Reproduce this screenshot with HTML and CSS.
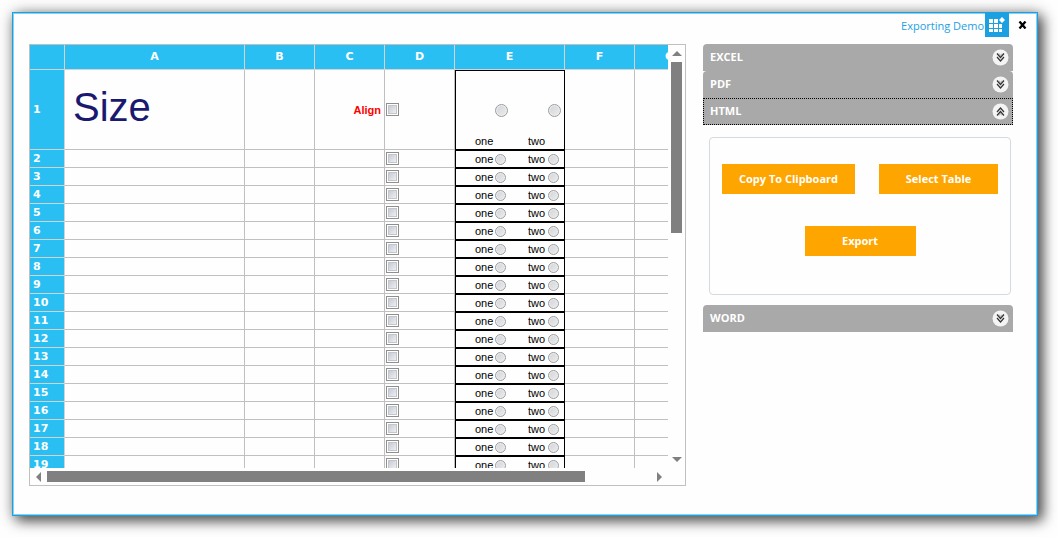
FILE: index.html
```html
<!DOCTYPE html>
<html lang="en">
<head>
<meta charset="utf-8">
<title>Exporting Demo</title>
<link rel="stylesheet" href="styles.css">
</head>
<body>
<svg class="defs" aria-hidden="true">
  <symbol id="chevrons" viewBox="0 0 17 17">
    <circle cx="8.500" cy="8.500" r="8" fill="#f4f4f4"/>
    <path d="M5 4.500L8.500 8.500L12 4.500M5 8L8.500 12L12 8" fill="none" stroke="#333" stroke-width="1.200"/>
    <path d="M7 4.500L8.500 6.500L10 4.500" fill="none" stroke="#999" stroke-width="0.800"/>
  </symbol>
</svg>
<main class="window">
  <header class="bar">
    <span class="title">Exporting Demo</span>
    <svg class="logo" viewBox="0 0 24 24" aria-hidden="true">
      <rect width="24" height="24" fill="#1ba1e2"/>
      <path fill="#fff" d="M4 6h4v4h-4zM9 6h4v4h-4zM4 11h4v4h-4zM9 11h4v4h-4zM14 11h3v4h-3zM4 16h4v3h-4zM9 16h4v3h-4zM14 16h3v3h-3zM17 4l3 3l-3 3l-3 -3z"/>
    </svg>
    <button class="close" type="button" aria-label="Close">
      <svg viewBox="0 0 8 8"><path d="M1 0.500L7 7.500M7 0.500L1 7.500" stroke="#000" stroke-width="2.300"/></svg>
    </button>
  </header>
  <div class="content">
    <section class="sheet">
      <div class="viewport">
        <table class="cells">
          <colgroup><col class="w-index"><col class="w-a"><col class="w-std"><col class="w-std"><col class="w-std"><col class="w-e"><col class="w-std"><col class="w-std"></colgroup>
          <thead><tr><th></th><th>A</th><th>B</th><th>C</th><th>D</th><th>E</th><th>F</th><th>G</th></tr></thead>
          <tbody id="rows">
            <tr class="tall">
              <th>1</th><td class="size">Size</td><td></td><td class="align">Align</td>
              <td><input class="check" type="checkbox" aria-label="D1"></td>
              <td class="choice"><div class="options"><label class="option"><span class="name">one</span><input class="radio" type="radio" name="r1"></label><label class="option"><span class="name">two</span><input class="radio" type="radio" name="r1"></label></div></td>
              <td></td><td></td>
            </tr>
          </tbody>
        </table>
      </div>
      <div class="scroll vertical"><span class="arrow"><i class="tri up"></i></span><div class="track"><div class="thumb"></div></div><span class="arrow"><i class="tri down"></i></span></div>
      <div class="scroll horizontal"><span class="arrow"><i class="tri left"></i></span><div class="track"><div class="thumb"></div></div><span class="arrow"><i class="tri right"></i></span></div>
    </section>
    <aside class="accordion">
      <button class="head" type="button" aria-expanded="false">EXCEL<svg class="icon"><use href="#chevrons"/></svg></button>
      <button class="head" type="button" aria-expanded="false">PDF<svg class="icon"><use href="#chevrons"/></svg></button>
      <button class="head current" type="button" aria-expanded="true">HTML<svg class="icon flipped"><use href="#chevrons"/></svg></button>
      <div class="panel">
        <div class="actions"><button class="action copy" type="button">Copy To Clipboard</button><button class="action select" type="button">Select Table</button></div>
        <div class="actions"><button class="action export" type="button">Export</button></div>
      </div>
      <button class="head" type="button" aria-expanded="false">WORD<svg class="icon"><use href="#chevrons"/></svg></button>
    </aside>
  </div>
</main>
<script src="rows.js"></script>
</body>
</html>
```

FILE: styles.css
```css
* { box-sizing: border-box; }
body {
  margin: 0;
  min-height: 100vh;
  padding: 12px 20px 21px 12px;
  display: flex;
  background: #fefefe;
  font: 11px/14px "Open Sans", "Noto Sans", sans-serif;
}
button { font: inherit; border: 0; padding: 0; margin: 0; }
input { appearance: none; margin: 0; display: block; flex: none; }
.defs { position: absolute; width: 0; height: 0; }

.window {
  flex: 1;
  min-width: 0;
  display: flex;
  flex-direction: column;
  padding: 0 24px 29px 16px;
  background: #fefefe;
  border: 1px solid #1ba1e2;
  box-shadow: inset 0 0 0 1px #8ccdf0, 5px 5px 12px rgba(0, 0, 0, .5), 2px 2px 14px rgba(0, 0, 0, .45);
}
.bar { display: flex; justify-content: flex-end; align-items: center; height: 24px; margin: 0 -16px 7px 0; }
.title { color: #1ba1e2; padding-right: 1px; padding-top: 2px; }
.logo { width: 24px; height: 24px; margin-right: 9px; }
.close { width: 11px; height: 24px; background: none; }
.close svg { display: block; width: 9px; height: 8px; }

.content {
  flex: 1;
  display: grid;
  grid-template-columns: minmax(0, 657fr) minmax(0, 310fr);
  gap: 17px;
}
.sheet {
  display: grid;
  grid-template-columns: minmax(0, 1fr) 17px;
  grid-template-rows: minmax(0, 1fr) 17px;
  border: 1px solid #c0c0c0;
}
.viewport { overflow: hidden; height: 0; min-height: 100%; }
.cells { table-layout: fixed; width: 675px; border-collapse: separate; border-spacing: 0; }
.w-index { width: 35px; }
.w-a { width: 180px; }
.w-std { width: 70px; }
.w-e { width: 110px; }
.cells th, .cells td {
  height: 18px;
  padding: 0;
  border: solid #c0c0c0;
  border-width: 0 1px 1px 0;
  vertical-align: middle;
  line-height: 14px;
}
.cells th {
  background: #29bff2;
  border-color: #d3d3d3;
  color: #fff;
  font-family: "DejaVu Sans", sans-serif;
  font-weight: bold;
}
.cells thead th { height: 25px; }
.cells tbody th { text-align: left; padding-left: 3px; }
.cells .tall > * { height: 80px; }
.cells .size { font: 40px/46px "Liberation Sans", sans-serif; color: #191970; padding: 0 0 6px 8px; }
.cells .align { font-family: "Liberation Sans", sans-serif; font-weight: bold; color: #f00; text-align: right; padding-right: 3px; }
.check {
  width: 13px;
  height: 13px;
  margin-left: 1px;
  border: 1px solid #8e8f8f;
  background: linear-gradient(135deg, #c8cbd6, #f4f4f4) center / 8px 8px no-repeat #fff;
  outline: 1px solid #c3c6cb;
  outline-offset: -3px;
}
.cells .choice { border: 1px solid #000; }
.options { display: flex; align-items: center; height: 16px; }
.option { display: flex; align-items: center; width: 53px; height: 100%; }
.name { width: 39px; padding-left: 19px; font: 11px/14px "Liberation Sans", sans-serif; }
.radio {
  width: 11px;
  height: 11px;
  border: 1px solid #9b9c9c;
  border-radius: 50%;
  background: linear-gradient(135deg, #d0d3da, #ededed) padding-box;
  box-shadow: inset 0 0 0 1px #eee;
}
.tall .options, .tall .option { height: 78px; }
.tall .name { align-self: flex-end; padding-bottom: 1px; }
.tall .radio { width: 13px; height: 13px; }

.scroll { display: flex; align-items: center; }
.vertical { flex-direction: column; }
.track { flex: 1; min-width: 0; }
.vertical .track { width: 11px; }
.thumb { background: #808080; }
.vertical .thumb { height: 44%; }
.vertical .track { min-height: 0; height: 0; }
.horizontal .thumb { width: 89%; height: 11px; }
.arrow { width: 17px; height: 17px; display: flex; align-items: center; justify-content: center; }
.tri { border: 5px solid transparent; }
.up { border-top: 0; border-bottom-color: #808080; }
.down { border-bottom: 0; border-top-color: #808080; }
.left { border-left: 0; border-right-color: #808080; }
.right { border-right: 0; border-left-color: #808080; }

.accordion { font-weight: bold; }
.head {
  display: flex;
  align-items: center;
  justify-content: space-between;
  width: 100%;
  height: 27px;
  padding: 0 4px 1px 7px;
  border-radius: 4px 4px 0 0;
  background: #a9a9a9;
  color: #fff;
}
.current { border-radius: 0; outline: 1px dotted #000; outline-offset: -1px; }
.icon { width: 17px; height: 17px; }
.flipped { transform: rotate(180deg); }
.panel {
  height: 158px;
  margin: 12px 2px 10px 6px;
  padding-top: 26px;
  border: 1px solid #d3dae2;
  border-radius: 4px;
}
.actions { display: flex; justify-content: center; gap: 24px; margin-bottom: 32px; }
.action { height: 30px; background: #ffa500; color: #fff; }
.copy { width: 133px; }
.select { width: 119px; }
.export { width: 111px; }
```

FILE: rows.js
```js
const body = document.getElementById("rows");
for (let n = 2; n <= 19; n++) {
  const option = (name) =>
    `<label class="option"><span class="name">${name}</span><input class="radio" type="radio" name="r${n}"></label>`;
  body.insertAdjacentHTML("beforeend",
    `<tr><th>${n}</th><td></td><td></td><td></td>
     <td><input class="check" type="checkbox" aria-label="D${n}"></td>
     <td class="choice"><div class="options">${option("one")}${option("two")}</div></td>
     <td></td><td></td></tr>`);
}
```
